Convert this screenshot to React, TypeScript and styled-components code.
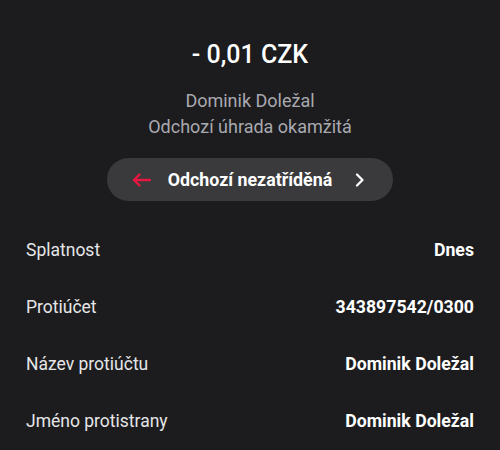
import React from "react";
import styled, { createGlobalStyle } from "styled-components";

const Global = createGlobalStyle`
  html, body { margin: 0; padding: 0; background: #1c1c1e; }
  body { font-family: Roboto, "Noto Sans", sans-serif; color: #fff; }
`;

const Page = styled.div`
  width: 500px;
  height: 450px;
  background: #1c1c1e;
  display: flex;
  flex-direction: column;
  align-items: center;
  padding-top: 40px;
  box-sizing: border-box;
  overflow: hidden;
`;

const Amount = styled.div`
  font-size: 25px;
  font-weight: 500;
  line-height: 30px;
  color: #fff;
`;

const Sub = styled.div`
  font-size: 18px;
  line-height: 26px;
  color: #a9a9b0;
  text-align: center;
`;

const SubBlock = styled.div`
  margin-top: 18px;
  display: flex;
  flex-direction: column;
  align-items: center;
`;

const Pill = styled.div`
  margin-top: 18px;
  width: 286px;
  height: 43px;
  border-radius: 22px;
  background: #3a3a3c;
  display: flex;
  align-items: center;
  box-sizing: border-box;
  padding: 0 28px 0 24px;
  gap: 14px;
`;

const PillText = styled.span`
  flex: 1;
  padding-right: 6px;
  font-size: 17.8px;
  font-weight: 700;
  color: #fff;
  text-align: center;
`;

const List = styled.div`
  align-self: stretch;
  margin-top: 20px;
  padding: 0 26px;
  display: flex;
  flex-direction: column;
`;

const Row = styled.div`
  height: 57px;
  display: flex;
  align-items: center;
  justify-content: space-between;
`;

const Label = styled.span`
  font-size: 17.5px;
  color: #e6e6e8;
`;

const Value = styled.span`
  font-size: 17.7px;
  font-weight: 700;
  color: #fff;
`;

const rows = [
  ["Splatnost", "Dnes"],
  ["Protiúčet", "343897542/0300"],
  ["Název protiúčtu", "Dominik Doležal"],
  ["Jméno protistrany", "Dominik Doležal"],
];

export default function App() {
  return (
    <>
      <Global />
      <Page>
        <Amount>- 0,01 CZK</Amount>
        <SubBlock>
          <Sub>Dominik Doležal</Sub>
          <Sub>Odchozí úhrada okamžitá</Sub>
        </SubBlock>
        <Pill>
          <svg width="20" height="14" viewBox="0 0 20 14">
            <path d="M19 7H3M8.5 1.5L3 7l5.5 5.5" stroke="#e8173f" strokeWidth="2.4" fill="none" strokeLinecap="round" strokeLinejoin="round" />
          </svg>
          <PillText>Odchozí nezatříděná</PillText>
          <svg width="10" height="14" viewBox="0 0 10 14">
            <path d="M2 1.5L7.5 7 2 12.5" stroke="#fff" strokeWidth="2.2" fill="none" strokeLinecap="round" strokeLinejoin="round" />
          </svg>
        </Pill>
        <List>
          {rows.map(([l, v]) => (
            <Row key={l}>
              <Label>{l}</Label>
              <Value>{v}</Value>
            </Row>
          ))}
        </List>
      </Page>
    </>
  );
}
